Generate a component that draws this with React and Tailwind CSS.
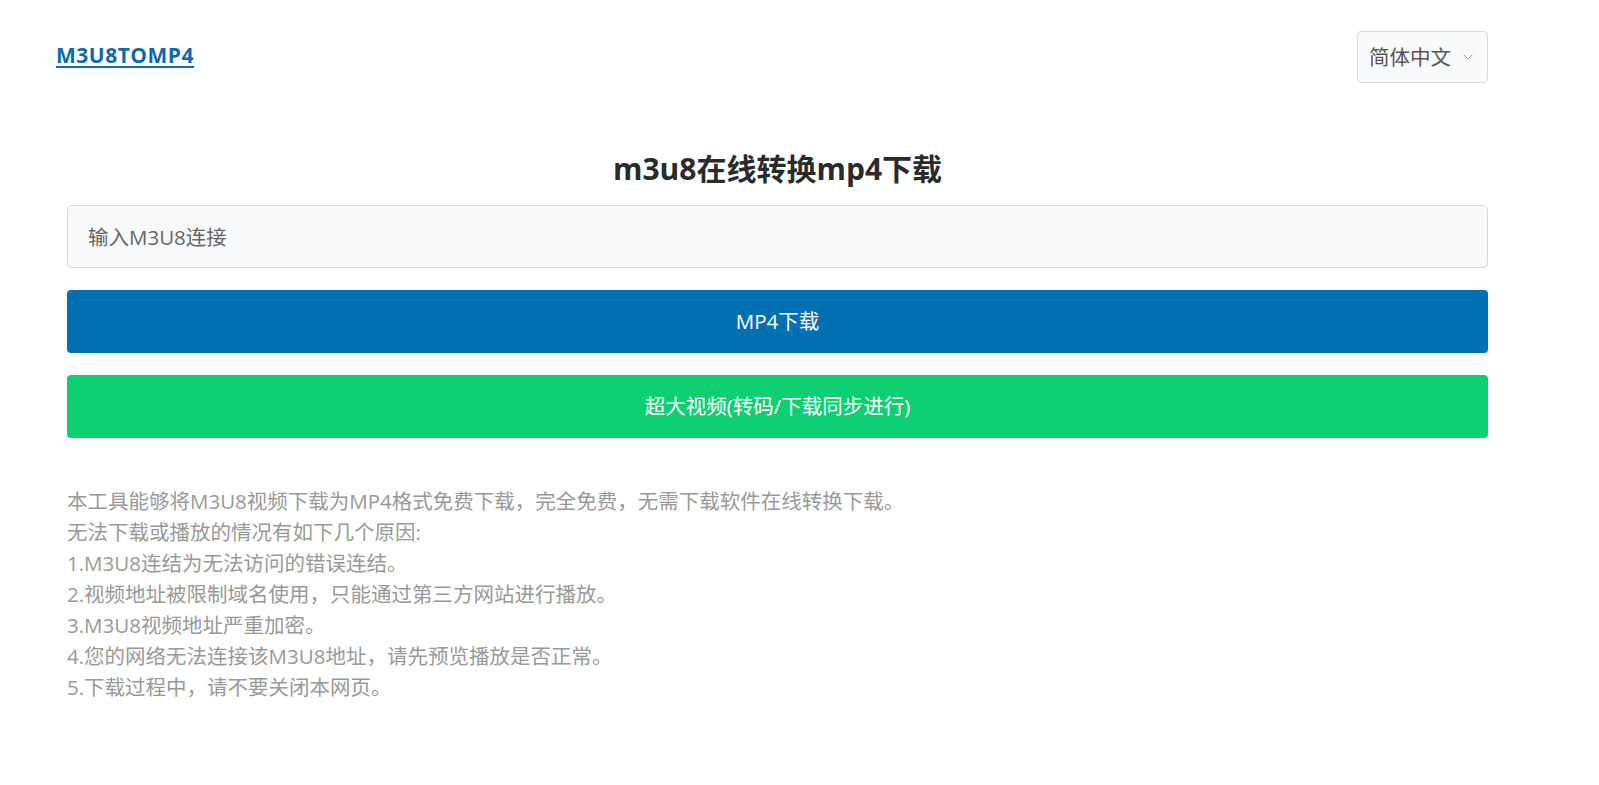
import { ChevronDown } from 'lucide-react';

const font = { fontFamily: '"Open Sans", "Noto Sans CJK SC", sans-serif' };

export default function App() {
  return (
    <div className="min-h-screen bg-white text-[#333]" style={font}>
      {/* Header */}
      <header className="flex w-[1432px] items-center justify-between ml-[56px] pt-[31px]">
        <a href="#" className="text-[21px] font-bold tracking-[0.5px] text-[#0f6aa6] underline underline-offset-[3px] -mt-[2px]">
          M3U8TOMP4
        </a>
        <button className="flex items-center gap-[9px] h-[52px] w-[131px] pl-[11px] border border-[#d9d9d9] rounded-[4px] bg-[#f9fafb] text-[20.5px] text-[#555]">
          简体中文
          <ChevronDown className="w-[16px] h-[16px] text-[#999]" strokeWidth={1.5} />
        </button>
      </header>

      {/* Main */}
      <main className="w-[1421px] ml-[67px]">
        <h1 className="mt-[66px] text-center text-[30px] font-bold leading-[40px] text-[#2b2b2b]">
          m3u8在线转换mp4下载
        </h1>
        <div className="mt-[16px] flex flex-col gap-[22px]">
          <input
            placeholder="输入M3U8连接"
            className="h-[63px] w-full rounded-[5px] border border-[#d6d6d6] bg-[#f9fafb] px-[20px] text-[20.5px] placeholder:text-[#666] outline-none"
          />
          <button className="h-[63px] w-full rounded-[4px] bg-[#0070b0] text-[20.5px] text-white">
            MP4下载
          </button>
          <button className="h-[63px] w-full rounded-[4px] bg-[#0fcf73] text-[20.5px] text-white">
            超大视频(转码/下载同步进行)
          </button>
        </div>

        <div className="mt-[48px] text-[20.5px] leading-[31px] text-[#999]">
          <p>本工具能够将M3U8视频下载为MP4格式免费下载，完全免费，无需下载软件在线转换下载。</p>
          <p>无法下载或播放的情况有如下几个原因:</p>
          <p>1.M3U8连结为无法访问的错误连结。</p>
          <p>2.视频地址被限制域名使用，只能通过第三方网站进行播放。</p>
          <p>3.M3U8视频地址严重加密。</p>
          <p>4.您的网络无法连接该M3U8地址，请先预览播放是否正常。</p>
          <p>5.下载过程中，请不要关闭本网页。</p>
        </div>
      </main>
    </div>
  );
}
